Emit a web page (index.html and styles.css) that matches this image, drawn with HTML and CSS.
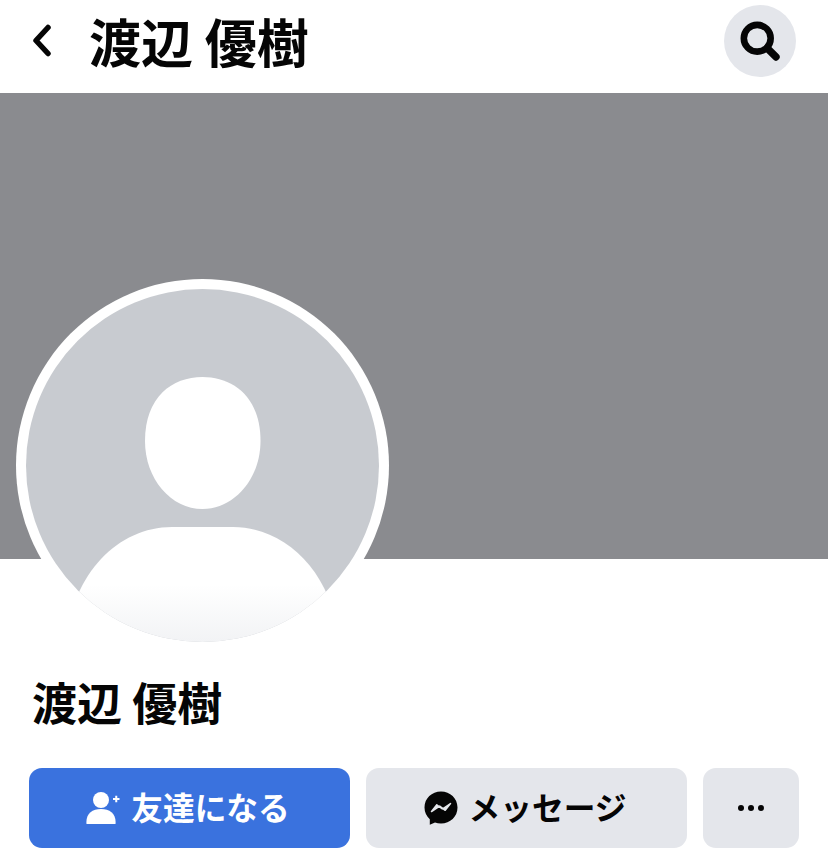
FILE: index.html
```html
<!DOCTYPE html>
<html lang="ja">

<head>
    <meta charset="utf-8">
    <title>渡辺 優樹</title>
    <link rel="stylesheet" href="styles.css">
</head>

<body>
    <header class="topbar">
        <button class="back" aria-label="戻る">
            <svg width="24" height="34" viewBox="0 0 24 34">
                <path d="M18 3.500 L6 16.500 L18 29.500" fill="none" stroke="#050505" stroke-width="5.500" stroke-linecap="round" stroke-linejoin="round" />
            </svg>
        </button>
        <h1 class="title">渡辺 優樹</h1>
        <button class="search" aria-label="検索">
            <svg width="44" height="44" viewBox="0 0 40 40">
                <circle cx="17.500" cy="17.500" r="12.200" fill="none" stroke="#050505" stroke-width="6" />
                <path d="M26.500 26.500 L34.500 34.500" stroke="#050505" stroke-width="6.800" stroke-linecap="round" />
            </svg>
        </button>
    </header>

    <div class="cover"></div>

    <section class="profile">
        <div class="avatar">
            <svg width="353" height="353" viewBox="0 0 353 353">
                <defs>
                    <linearGradient id="fade" x1="0" y1="0" x2="0" y2="1">
                        <stop offset="0.500" stop-color="#ffffff" />
                        <stop offset="1" stop-color="#f2f3f5" />
                    </linearGradient>
                    <clipPath id="rund">
                        <circle cx="176.500" cy="176.500" r="176.500" />
                    </clipPath>
                </defs>
                <circle cx="176.500" cy="176.500" r="176.500" fill="#c8cbd0" />
                <path d="M176.500 88 C207 88 234.500 108 234.500 152 C234.500 190 208 220 176.500 220 C145 220 119 190 119 152 C119 108 146 88 176.500 88 Z" fill="#fff" />
                <path clip-path="url(#rund)" d="M40 353 C46 285 92 238 146 238 L207 238 C261 238 307 285 313 353 Z" fill="url(#fade)" />
            </svg>
        </div>

        <h2 class="name">渡辺 優樹</h2>

        <div class="actions">
            <button class="btn btn-blue">
                <svg width="34" height="34" viewBox="0 0 34 34">
                    <circle cx="15" cy="9" r="8" fill="#fff" />
                    <path d="M.500 33 C-.500 23 6 18 15 18 C24 18 30.500 23 29.500 33 Z" fill="#fff" />
                    <path d="M27 8 H33.500 M30.250 4.700 V11.300" stroke="#fff" stroke-width="2" />
                </svg>
                <span class="label">友達になる</span>
            </button>
            <button class="btn">
                <svg width="34" height="34" viewBox="0 0 34 34">
                    <path d="M17 .500 C7.800 .500 .500 7.300 .500 16.500 C.500 21.300 2.500 25.400 5.800 28.200 V33.800 L11 31.500 C12.800 32.100 14.900 32.500 17 32.500 C26.200 32.500 33.500 25.700 33.500 16.500 C33.500 7.300 26.200 .500 17 .500 Z" fill="#050505" />
                    <path d="M7.500 20.500 L12.800 13.800 L18.300 18 L26.500 12.500 L21.200 19.300 L15.700 15.100 Z" fill="#e4e6eb" stroke="#e4e6eb" stroke-width="1.500" stroke-linejoin="round" />
                </svg>
                <span class="label">メッセージ</span>
            </button>
            <button class="btn btn-more" aria-label="その他">
                <span class="dot"></span><span class="dot"></span><span class="dot"></span>
            </button>
        </div>
    </section>
</body>

</html>
```

FILE: styles.css
```css
* {
    margin: 0;
    padding: 0;
    box-sizing: border-box;
}

body {
    font-family: "Noto Sans CJK JP", "Liberation Sans", sans-serif;
    background-color: white;
    color: #050505;
    height: 866px;
    overflow: hidden;
}

button {
    border: none;
    background: none;
    font-family: inherit;
    color: inherit;
}

/* Top bar */
.topbar {
    display: flex;
    align-items: center;
    height: 93px;
    padding: 0 32px 11px 30px;
}

.back {
    display: flex;
    width: 59px;
}

.title {
    font-size: 52px;
    line-height: 1;
    font-weight: 700;
    flex: 1;
}

.search {
    display: flex;
    align-items: center;
    justify-content: center;
    width: 72px;
    height: 72px;
    border-radius: 50%;
    background-color: #e4e6eb;
}

/* Cover */
.cover {
    height: 466px;
    background-color: #8a8b8f;
}

/* Profile */
.profile {
    padding: 0 29px;
}

.avatar {
    width: 373px;
    height: 373px;
    margin: -280px 0 0 -13px;
    position: relative;
    padding: 10px;
    border-radius: 50%;
    background-color: white;
}

.avatar svg {
    display: block;
}

.name {
    font-size: 45px;
    line-height: 60px;
    font-weight: 700;
    margin: 20px 0 0 3px;
}

/* Buttons */
.actions {
    display: grid;
    grid-template-columns: 321px 321px 96px;
    gap: 16px;
    margin-top: 36px;
}

.btn {
    display: flex;
    align-items: center;
    justify-content: center;
    gap: 11px;
    height: 80px;
    border-radius: 13px;
    background-color: #e4e6eb;
    font-size: 31.700px;
    font-weight: 700;
}

.label {
    position: relative;
    top: -2px;
    margin-right: 3px;
}

.btn-blue {
    background-color: #3a72de;
    color: white;
}

.btn-more {
    gap: 4px;
}

.dot {
    width: 6px;
    height: 6px;
    border-radius: 50%;
    background-color: #050505;
}
```
